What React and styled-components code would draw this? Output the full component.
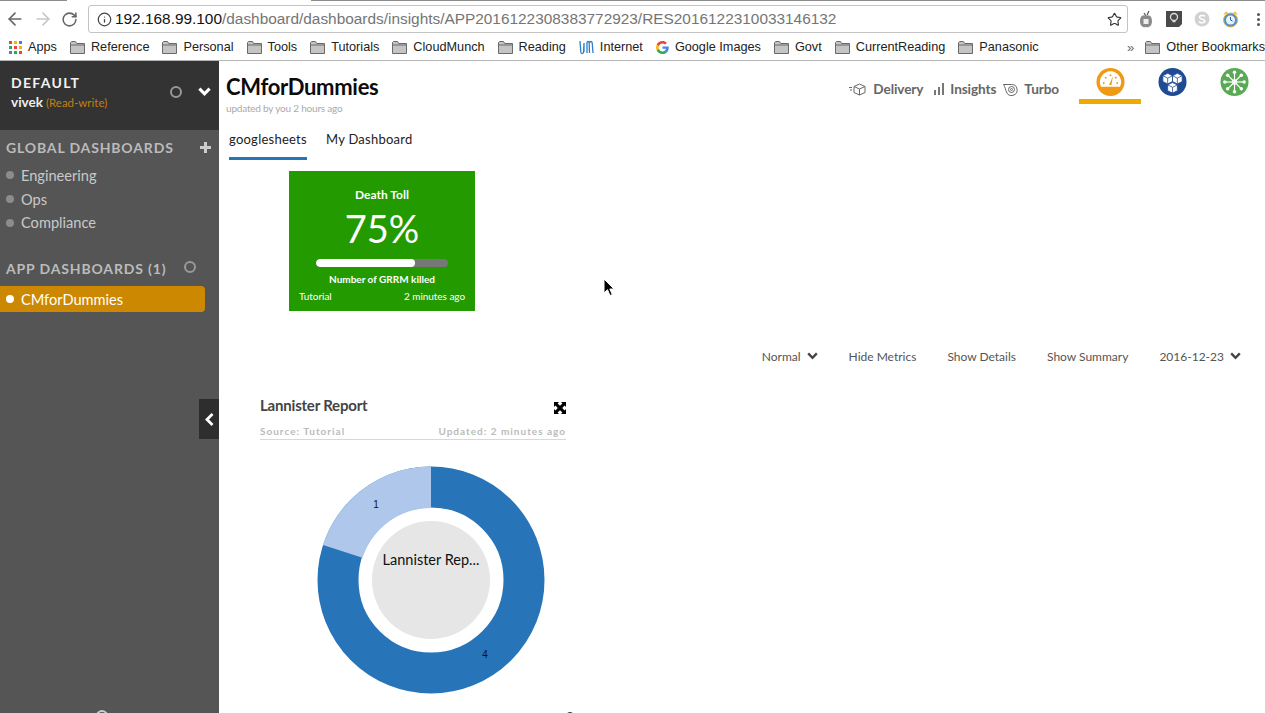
import React from 'react'
import styled, { createGlobalStyle } from 'styled-components'
import { ArrowLeft, ArrowRight, RotateCw, Info, Star } from 'lucide-react'

const GlobalStyle = createGlobalStyle`
  html, body {
    margin: 0;
    padding: 0;
    height: 713px;
    overflow: hidden;
    background: #fff;
    font-family: Lato, "Liberation Sans", sans-serif;
  }
  * { box-sizing: border-box; }
`

const BOOKMARKS = [
  { label: 'Apps', icon: 'apps' },
  { label: 'Reference' },
  { label: 'Personal' },
  { label: 'Tools' },
  { label: 'Tutorials' },
  { label: 'CloudMunch' },
  { label: 'Reading' },
  { label: 'Internet', icon: 'um' },
  { label: 'Google Images', icon: 'google' },
  { label: 'Govt' },
  { label: 'CurrentReading' },
  { label: 'Panasonic' },
]

const Folder = () => (
  <svg width="15" height="13" viewBox="0 0 15 13">
    <path d="M.5 12.500V1.500l1-1h4l1.200 2h7.800v10z" fill="#c4c4c4" stroke="#6a6a6a" />
    <path d="M1 4h13" stroke="#6a6a6a" />
  </svg>
)

const AppsIcon = () => {
  const colors = ['#e8453c', '#f4b400', '#3f7fe8', '#34a853', '#e8453c', '#f4b400', '#3f7fe8', '#34a853', '#e8453c']
  return (
    <svg width="13" height="13" viewBox="0 0 13 13">
      {colors.map((c, i) => (
        <rect key={i} x={(i % 3) * 5} y={Math.floor(i / 3) * 5} width="3" height="3" fill={c} />
      ))}
    </svg>
  )
}

const UmIcon = () => (
  <svg width="15" height="15" viewBox="0 0 15 15" fill="none" stroke="#2c7fc4" strokeWidth="1.300">
    <path d="M1 1l.8 11c.2 2 2.600 2 2.800 0L5 3M5 3v9M8 13V3c0-2 2-2 2.200 0l.3 10M10.500 3c.3-2 2.500-2 2.700 0L14 13" />
  </svg>
)

const GoogleIcon = () => (
  <svg width="13" height="13" viewBox="0 0 48 48">
    <path fill="#ea4335" d="M24 9.500c3.500 0 6.700 1.200 9.200 3.600l6.900-6.900C35.900 2.400 30.500 0 24 0 14.600 0 6.500 5.400 2.600 13.200l8 6.200C12.500 13.600 17.800 9.500 24 9.500z" />
    <path fill="#4285f4" d="M47 24.500c0-1.600-.1-3.100-.4-4.500H24v9h12.900c-.6 3-2.200 5.500-4.800 7.200l7.700 6C44.300 37.900 47 31.800 47 24.500z" />
    <path fill="#fbbc05" d="M10.600 28.600c-.5-1.500-.8-3-.8-4.600s.3-3.100.8-4.600l-8-6.200C.9 16.500 0 20.100 0 24s.9 7.500 2.600 10.800z" />
    <path fill="#34a853" d="M24 48c6.500 0 11.900-2.100 15.800-5.800l-7.700-6c-2.100 1.400-4.900 2.300-8.100 2.300-6.200 0-11.500-4.200-13.400-9.900l-8 6.200C6.500 42.600 14.600 48 24 48z" />
  </svg>
)

const bookmarkIcon = { apps: <AppsIcon />, um: <UmIcon />, google: <GoogleIcon /> }

const Chrome = styled.header`
  height: 61px;
  flex: none;
  background: #fff;
  border-bottom: 1px solid #b5b5b5;
`

const TabStrip = styled.div`
  display: flex;
  justify-content: space-between;
  height: 1px;
`

const TabEdge = styled.span`
  width: ${p => p.$w}px;
  background: #8c8c8c;
`

const Toolbar = styled.div`
  display: flex;
  align-items: center;
  height: 28px;
  margin-top: 4px;
  padding-left: 5px;
`

const NavIcons = styled.div`
  display: flex;
  align-items: center;
  gap: 8px;
  width: 83px;
  color: #666;
`

const Omnibox = styled.div`
  width: 1040px;
  height: 28px;
  flex: none;
  display: flex;
  align-items: center;
  gap: 3px;
  padding: 0 5px 0 8px;
  border: 1px solid #c4c4c4;
  border-radius: 3px;
  font: 15.4px "Liberation Sans", Arial, sans-serif;
  color: #757575;
`

const Host = styled.span`
  color: #111;
`

const Url = styled.div`
  flex: 1;
  white-space: nowrap;
`

const Extensions = styled.div`
  display: flex;
  align-items: center;
  margin-left: 10px;
  gap: 12px;
`

const Dots = styled.div`
  display: grid;
  gap: 2px;
  margin-left: 18px;
  span {
    width: 3px;
    height: 3px;
    border-radius: 50%;
    background: #555;
  }
`

const BookmarkBar = styled.div`
  display: flex;
  align-items: center;
  gap: 13px;
  height: 20px;
  margin-top: 4px;
  padding-left: 9px;
  font: 12.7px "Liberation Sans", Arial, sans-serif;
  color: #222;
`

const Bookmark = styled.div`
  display: flex;
  align-items: center;
  gap: 6px;
  flex: none;
  white-space: nowrap;
`

const Chevrons = styled.span`
  margin-left: auto;
  margin-right: -2px;
  color: #666;
  font-size: 13px;
`

const Main = styled.div`
  flex: 1;
  display: flex;
  min-height: 0;
`

const Page = styled.div`
  height: 713px;
  display: flex;
  flex-direction: column;
  overflow: hidden;
  position: relative;
`

const Sidebar = styled.aside`
  width: 219px;
  flex: none;
  background: #555;
  display: flex;
  flex-direction: column;
  position: relative;
`

const Workspace = styled.div`
  height: 69px;
  flex: none;
  background: #333;
  padding: 13px 0 0 11px;
  display: flex;
`

const WorkspaceText = styled.div`
  flex: 1;
`

const WorkspaceName = styled.div`
  font-size: 14px;
  font-weight: 700;
  letter-spacing: 1.3px;
  color: #f2f2f2;
  line-height: 17px;
`

const WorkspaceUser = styled.div`
  font-size: 13.5px;
  font-weight: 700;
  color: #eee;
  line-height: 16px;
  margin-top: 3px;
  span {
    font-size: 11.5px;
    font-weight: 400;
    color: #c47f12;
    margin-left: 3px;
  }
`

const Ring = styled.span`
  display: block;
  width: 12px;
  height: 12px;
  border: 2px solid #999;
  border-radius: 50%;
  flex: none;
`

const WorkspaceActions = styled.div`
  display: flex;
  align-items: center;
  gap: 16px;
  height: 20px;
  margin: 8px 8px 0 0;
`

const SectionHead = styled.div`
  display: flex;
  align-items: center;
  justify-content: space-between;
  padding: 0 8px 0 6px;
  height: 20px;
  flex: none;
  margin-top: ${p => p.$top}px;
  font-size: 14px;
  font-weight: 700;
  letter-spacing: 0.85px;
  color: #bbb;
  white-space: nowrap;
`

const AppRing = styled(Ring)`
  margin: -2px 15px 0 0;
`

const NavItem = styled.div`
  display: flex;
  align-items: center;
  gap: 7px;
  height: ${p => p.$h || 24}px;
  padding-left: 6px;
  font-size: 14.6px;
  color: #c9c9c9;
  &::before {
    content: '';
    width: 8px;
    height: 8px;
    border-radius: 50%;
    background: #8c8c8c;
  }
`

const Items = styled.div`
  margin-top: 6px;
`

const ActiveItem = styled(NavItem)`
  width: 205px;
  height: 26px;
  flex: none;
  margin-top: 8px;
  background: #cc8800;
  border-radius: 0 4px 4px 0;
  color: #fff;
  &::before { background: #fff; }
`

const CollapseHandle = styled.div`
  position: absolute;
  right: 0;
  top: 338px;
  width: 20px;
  height: 40px;
  background: #2e2e2e;
  display: flex;
  align-items: center;
  justify-content: center;
`

const FooterRing = styled.span`
  margin: auto 0 -9px 96px;
  width: 12px;
  height: 12px;
  border: 2px solid #ccc;
  border-radius: 50%;
`

const Content = styled.main`
  flex: 1;
  min-width: 0;
  display: flex;
  flex-direction: column;
`

const TopRow = styled.div`
  display: flex;
  flex: none;
  justify-content: space-between;
  padding-left: 7px;
  height: 62px;
`

const Title = styled.h1`
  margin: 12px 0 0;
  font-size: 22px;
  line-height: 28px;
  font-weight: 700;
  letter-spacing: -0.3px;
  color: #0b0b0b;
`

const Subtitle = styled.div`
  margin-top: 1px;
  font-size: 10px;
  line-height: 12px;
  letter-spacing: -0.02em;
  color: #aaa;
`

const ProductNav = styled.nav`
  display: flex;
  align-items: flex-start;
`

const Product = styled.div`
  display: flex;
  align-items: center;
  gap: ${p => p.$gap}px;
  margin-right: ${p => p.$mr}px;
  margin-top: 19px;
  height: 18px;
  font-size: 13.6px;
  font-weight: 700;
  letter-spacing: -0.1px;
  color: #666;
`

const LogoTab = styled.div`
  width: 62px;
  height: 43px;
  padding-top: 6px;
  display: flex;
  justify-content: center;
  border-bottom: ${p => (p.$active ? '5px solid #eeaa00' : '0')};
`

const Tabs = styled.div`
  display: flex;
  flex: none;
  gap: 19px;
  padding-left: 10px;
  height: 37px;
`

const Tab = styled.div`
  padding-top: 8px;
  width: ${p => p.$w}px;
  font-size: 13px;
  line-height: 17px;
  letter-spacing: 0.25px;
  color: #222;
  white-space: nowrap;
  border-bottom: ${p => (p.$active ? '3px solid #2775b8' : '0')};
`

const Tile = styled.section`
  width: 186px;
  height: 140px;
  margin: 11px 0 0 70px;
  background: #229a00;
  color: #fff;
  display: flex;
  flex-direction: column;
  align-items: center;
  flex: none;
`

const TileTitle = styled.div`
  margin-top: 16px;
  font-size: 12px;
  line-height: 16px;
  font-weight: 700;
`

const TileValue = styled.div`
  font-size: 38px;
  line-height: 48px;
  margin-top: 1px;
`

const Meter = styled.div`
  width: 132px;
  height: 8px;
  margin-top: 7px;
  border-radius: 4px;
  background: #777;
  overflow: hidden;
`

const MeterFill = styled.div`
  height: 100%;
  background: #fff;
  border-radius: 4px;
`

const TileCaption = styled.div`
  margin-top: 6px;
  font-size: 10px;
  line-height: 12px;
  font-weight: 700;
`

const TileFooter = styled.div`
  width: 100%;
  display: flex;
  justify-content: space-between;
  padding: 0 10px;
  margin-top: 5px;
  font-size: 10px;
  line-height: 12px;
  letter-spacing: -0.05px;
`

const ReportBar = styled.div`
  display: flex;
  flex: none;
  justify-content: flex-end;
  align-items: center;
  gap: 31px;
  height: 18px;
  margin-top: 36px;
  padding-right: 24px;
  font-size: 12px;
  color: #555;
  white-space: nowrap;
`

const BarItem = styled.div`
  display: flex;
  align-items: center;
  gap: 6px;
`

const Report = styled.section`
  width: 306px;
  flex: none;
  margin: 30px 0 0 41px;
  display: flex;
  flex-direction: column;
`

const ReportHead = styled.div`
  display: flex;
  justify-content: space-between;
  align-items: center;
  height: 20px;
  flex: none;
  font-size: 15px;
  font-weight: 700;
  letter-spacing: -0.2px;
  color: #444;
  svg { margin-top: 6px; }
`

const ReportMeta = styled.div`
  display: flex;
  justify-content: space-between;
  height: 17px;
  flex: none;
  margin-top: 8px;
  padding-top: 2px;
  border-bottom: 1px solid #d8d8d8;
  font-size: 10px;
  line-height: 12px;
  font-weight: 700;
  letter-spacing: 1px;
  color: #bbb;
`

const Donut = styled.svg`
  display: block;
  margin: 26px 0 0 57px;
  flex: none;
`

const EdgeMark = styled.span`
  align-self: flex-end;
  flex: none;
  width: 10px;
  height: 10px;
  margin: 18px -9px 0 0;
  border: 1px solid #333;
  border-radius: 50%;
`

const Pointer = styled.svg`
  position: absolute;
  left: 603px;
  top: 278px;
`

const ExtApple = () => (
  <svg width="16" height="18" viewBox="0 0 16 18">
    <path d="M9 5l2-4M6 3l2 3" stroke="#555" strokeWidth="1.200" />
    <path d="M8 6c3-2 6 0 6 5s-3 7-6 6c-3 1-6-1-6-6s3-7 6-5z" fill="#8a8a8a" />
    <rect x="5.500" y="9" width="5" height="5" fill="#eee" />
  </svg>
)

const ExtBulb = () => (
  <svg width="16" height="18" viewBox="0 0 16 18">
    <path d="M0 1h16v13l-3 3H0z" fill="#4a4a4a" />
    <circle cx="8" cy="7" r="3.500" fill="none" stroke="#ddd" strokeWidth="1.300" />
    <path d="M6.500 11.500h3" stroke="#ddd" strokeWidth="1.500" />
  </svg>
)

const ExtSkype = () => (
  <svg width="16" height="18" viewBox="0 0 16 18">
    <circle cx="8" cy="9" r="7.500" fill="#d2d2d2" />
    <path d="M11 6.500C10 5 5.500 5 5.500 7.300c0 2.500 5.300 1.300 5.300 3.800 0 2.200-4.700 2.200-5.800.4" fill="none" stroke="#fff" strokeWidth="1.500" />
  </svg>
)

const ExtClock = () => (
  <svg width="17" height="18" viewBox="0 0 17 18">
    <path d="M1 5l3-3.500 2 1.500zM16 5l-3-3.500-2 1.500z" fill="#e8b23a" />
    <circle cx="8.500" cy="10" r="7" fill="#4f93cf" stroke="#e8b23a" />
    <circle cx="8.500" cy="10" r="4.500" fill="#e6f1f9" />
    <path d="M8.500 7v3l2 1" stroke="#2f5f90" fill="none" />
  </svg>
)

const BrowserChrome = () => (
  <Chrome>
    <TabStrip>
      <TabEdge $w={67} />
      <TabEdge $w={954} />
    </TabStrip>
    <Toolbar>
      <NavIcons>
        <ArrowLeft size={20} strokeWidth={2} />
        <ArrowRight size={20} strokeWidth={2} color="#c8c8c8" />
        <RotateCw size={17} strokeWidth={2.200} />
      </NavIcons>
      <Omnibox>
        <Info size={15} strokeWidth={2} color="#444" />
        <Url><Host>192.168.99.100</Host>/dashboard/dashboards/insights/APP2016122308383772923/RES2016122310033146132</Url>
        <Star size={15} strokeWidth={1.800} color="#333" />
      </Omnibox>
      <Extensions>
        <ExtApple />
        <ExtBulb />
        <ExtSkype />
        <ExtClock />
      </Extensions>
      <Dots><span /><span /><span /></Dots>
    </Toolbar>
    <BookmarkBar>
      {BOOKMARKS.map(b => (
        <Bookmark key={b.label}>
          {b.icon ? bookmarkIcon[b.icon] : <Folder />}
          {b.label}
        </Bookmark>
      ))}
      <Chevrons>»</Chevrons>
      <Bookmark><Folder />Other Bookmarks</Bookmark>
    </BookmarkBar>
  </Chrome>
)

const Chevron = ({ color = '#444', size = 11, width = 2.500 }) => (
  <svg width={size} height={size * 0.7} viewBox="0 0 11 8" fill="none" stroke={color} strokeWidth={width}>
    <path d="M1 1.500l4.500 4.500L10 1.500" />
  </svg>
)

const SideNav = () => (
  <Sidebar>
    <Workspace>
      <WorkspaceText>
        <WorkspaceName>DEFAULT</WorkspaceName>
        <WorkspaceUser>vivek<span>(Read-write)</span></WorkspaceUser>
      </WorkspaceText>
      <WorkspaceActions>
        <Ring />
        <Chevron color="#fff" size={13} width={2.800} />
      </WorkspaceActions>
    </Workspace>
    <SectionHead $top={7}>
      GLOBAL DASHBOARDS
      <svg width="11" height="11" viewBox="0 0 11 11"><path d="M5.500 0v11M0 5.500h11" stroke="#ccc" strokeWidth="3" /></svg>
    </SectionHead>
    <Items>
      <NavItem>Engineering</NavItem>
      <NavItem>Ops</NavItem>
      <NavItem $h={23}>Compliance</NavItem>
    </Items>
    <SectionHead $top={24}>
      APP DASHBOARDS (1)
      <AppRing />
    </SectionHead>
    <ActiveItem>CMforDummies</ActiveItem>
    <CollapseHandle>
      <svg width="9" height="13" viewBox="0 0 9 13" fill="none" stroke="#fff" strokeWidth="2.800"><path d="M7.500 1L2 6.500 7.500 12" /></svg>
    </CollapseHandle>
    <FooterRing />
  </Sidebar>
)

const DeliveryIcon = () => (
  <svg width="18" height="13" viewBox="0 0 18 13" fill="none" stroke="#666">
    <path d="M0 4.500h3M1 7h2" />
    <path d="M10.500 1l5.500 2.500v6L10.500 12 5 9.500v-6zM5 3.500L10.500 6 16 3.500M10.500 6v6" />
  </svg>
)

const InsightsIcon = () => (
  <svg width="11" height="12" viewBox="0 0 11 12" fill="#777">
    <rect x="0" y="7" width="2" height="5" />
    <rect x="4" y="4" width="2" height="8" />
    <rect x="8" y="0" width="2" height="12" />
  </svg>
)

const TurboIcon = () => (
  <svg width="15" height="13" viewBox="0 0 15 13" fill="none" stroke="#666">
    <path d="M.5 1.500h8a5.500 5.500 0 1 1-5 7.500C2.500 6.500 2 4 .5 1.500z" />
    <circle cx="8.500" cy="6.500" r="3" />
    <circle cx="8.500" cy="6.500" r="1" />
  </svg>
)

const GaugeLogo = () => (
  <svg width="29" height="30" viewBox="0 0 30 30">
    <circle cx="15" cy="15" r="14.500" fill="#ef9a14" />
    <path d="M5.200 20A11 11 0 1 1 24.800 20z" fill="#fff" />
    <path d="M13.500 18l4-9-1.500 9z" fill="#ef9a14" />
    <circle cx="8" cy="16" r="1" fill="#ef9a14" />
    <circle cx="10" cy="10.500" r="1" fill="#ef9a14" />
    <circle cx="22" cy="16" r="1" fill="#ef9a14" />
    <circle cx="20.500" cy="10.500" r="1" fill="#ef9a14" />
    <circle cx="15" cy="8" r="1" fill="#ef9a14" />
  </svg>
)

const CubesLogo = () => (
  <svg width="29" height="30" viewBox="0 0 30 30">
    <circle cx="15" cy="15" r="14.500" fill="#1f4b94" />
    <path d="M10 6l5 2.500v6L10 17l-5-2.500v-6zM20 6l5 2.500v6L20 17l-5-2.500v-6zM15 15.500l5 2.500v6l-5 2.500-5-2.500v-6z" fill="#fff" stroke="#1f4b94" strokeWidth=".8" />
    <path d="M5 8.500L10 11l5-2.500L20 11l5-2.500M10 11v6M20 11v6M10 18l5 2.500 5-2.500M15 20.500v6" fill="none" stroke="#1f4b94" strokeWidth=".8" />
  </svg>
)

const HubLogo = () => {
  const spokes = [0, 45, 90, 135, 180, 225, 270, 315]
  return (
    <svg width="29" height="30" viewBox="0 0 30 30">
      <circle cx="15" cy="15" r="14.500" fill="#5aaa55" />
      <circle cx="15" cy="15" r="2.500" fill="none" stroke="#fff" />
      {spokes.map(a => {
        const x = 15 + 10 * Math.cos((a * Math.PI) / 180)
        const y = 15 + 10 * Math.sin((a * Math.PI) / 180)
        return (
          <g key={a}>
            <line x1="15" y1="15" x2={x} y2={y} stroke="#fff" strokeWidth="1.200" />
            <circle cx={x} cy={y} r="1.800" fill="#fff" />
          </g>
        )
      })}
    </svg>
  )
}

const ExpandIcon = () => (
  <svg width="12" height="12" viewBox="0 0 12 12" fill="#000">
    <path d="M0 0h5L3.600 1.400 6 3.800 8.400 1.400 7 0h5v5l-1.400-1.400L8.200 6l2.400 2.400L12 7v5H7l1.400-1.400L6 8.200l-2.400 2.400L5 12H0V7l1.400 1.400L3.800 6 1.400 3.600 0 5z" />
  </svg>
)

const DonutChart = () => (
  <Donut width="228" height="228" viewBox="0 0 228 228">
    <circle cx="114" cy="114" r="93" fill="none" stroke="#2775b8" strokeWidth="41" />
    <path d="M114 .5A113.500 113.500 0 0 0 6 78.900L45.500 91.700A72 72 0 0 1 114 42z" fill="#aec7ea" />
    <circle cx="114" cy="114" r="59" fill="#e6e6e6" />
    <text x="114" y="99" textAnchor="middle" fontFamily="Lato, sans-serif" fontSize="14.500" fill="#111">Lannister Rep...</text>
    <text x="59" y="42" textAnchor="middle" fontFamily="'Liberation Sans', sans-serif" fontSize="10" fill="#111">1</text>
    <text x="168" y="192" textAnchor="middle" fontFamily="'Liberation Sans', sans-serif" fontSize="10" fill="#111">4</text>
  </Donut>
)

const App = () => (
  <Page>
    <GlobalStyle />
    <BrowserChrome />
    <Main>
      <SideNav />
      <Content>
        <TopRow>
          <div>
            <Title>CMforDummies</Title>
            <Subtitle>updated by you 2 hours ago</Subtitle>
          </div>
          <ProductNav>
            <Product $gap={6} $mr={11}><DeliveryIcon />Delivery</Product>
            <Product $gap={5} $mr={7}><InsightsIcon />Insights</Product>
            <Product $gap={6} $mr={20}><TurboIcon />Turbo</Product>
            <LogoTab $active><GaugeLogo /></LogoTab>
            <LogoTab><CubesLogo /></LogoTab>
            <LogoTab><HubLogo /></LogoTab>
          </ProductNav>
        </TopRow>
        <Tabs>
          <Tab $active $w={78}>googlesheets</Tab>
          <Tab>My Dashboard</Tab>
        </Tabs>
        <Tile>
          <TileTitle>Death Toll</TileTitle>
          <TileValue>75%</TileValue>
          <Meter><MeterFill style={{ width: '75%' }} /></Meter>
          <TileCaption>Number of GRRM killed</TileCaption>
          <TileFooter><span>Tutorial</span><span>2 minutes ago</span></TileFooter>
        </Tile>
        <ReportBar>
          <BarItem>Normal <Chevron /></BarItem>
          <BarItem>Hide Metrics</BarItem>
          <BarItem>Show Details</BarItem>
          <BarItem>Show Summary</BarItem>
          <BarItem>2016-12-23 <Chevron /></BarItem>
        </ReportBar>
        <Report>
          <ReportHead>Lannister Report<ExpandIcon /></ReportHead>
          <ReportMeta><span>Source: Tutorial</span><span>Updated: 2 minutes ago</span></ReportMeta>
          <DonutChart />
          <EdgeMark />
        </Report>
      </Content>
    </Main>
    <Pointer width="12" height="19" viewBox="0 0 12 19">
      <path d="M1 1v14l3.500-3.300L7 17.500l2.300-1-2.500-5.500H11z" fill="#000" stroke="#fff" />
    </Pointer>
  </Page>
)

export default App
